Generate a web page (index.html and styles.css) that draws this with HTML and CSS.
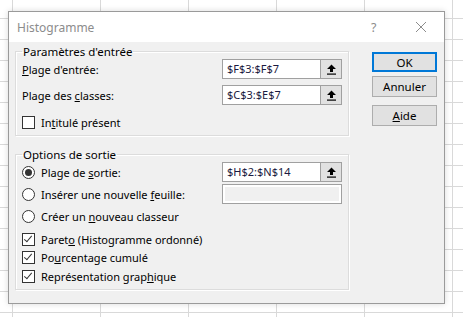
FILE: index.html
```html
<!DOCTYPE html>
<html lang="fr">
<head>
  <meta charset="UTF-8">
  <title>Histogramme</title>
  <link rel="stylesheet" href="styles.css">
</head>
<body>
  <div class="dialog">
    <div class="titlebar">
      <span class="title">Histogramme</span>
      <span class="help">?</span>
      <span class="close">
        <svg width="12" height="12" viewBox="0 0 12 12"><path d="M1 1 L11 11 M11 1 L1 11" stroke="#8c8c8c" stroke-width="1" fill="none"/></svg>
      </span>
    </div>

    <div class="content">
      <div class="groups">
        <fieldset class="group group-in">
          <legend>Paramètres d'entrée</legend>
          <div class="row">
            <span class="label"><u>P</u>lage d'entrée:</span>
            <div class="ref">
              <span class="ref-text">$F$3:$F$7</span>
              <span class="ref-btn">
                <svg width="11" height="11" viewBox="0 0 11 11"><path d="M5.5 0.5 L10 5 L7 5 L7 8 L4 8 L4 5 L1 5 Z" fill="#000"/><rect x="1" y="9.5" width="9" height="1.2" fill="#000"/></svg>
              </span>
            </div>
          </div>
          <div class="row">
            <span class="label">Plage des <u>c</u>lasses:</span>
            <div class="ref">
              <span class="ref-text">$C$3:$E$7</span>
              <span class="ref-btn">
                <svg width="11" height="11" viewBox="0 0 11 11"><path d="M5.5 0.5 L10 5 L7 5 L7 8 L4 8 L4 5 L1 5 Z" fill="#000"/><rect x="1" y="9.5" width="9" height="1.2" fill="#000"/></svg>
              </span>
            </div>
          </div>
          <div class="row row-check">
            <span class="check"></span>
            <span class="label">In<u>t</u>itulé présent</span>
          </div>
        </fieldset>

        <fieldset class="group group-out">
          <legend>Options de sortie</legend>
          <div class="row">
            <span class="radio on"></span>
            <span class="label">Plage de <u>s</u>ortie:</span>
            <div class="ref">
              <span class="ref-text">$H$2:$N$14</span>
              <span class="ref-btn">
                <svg width="11" height="11" viewBox="0 0 11 11"><path d="M5.5 0.5 L10 5 L7 5 L7 8 L4 8 L4 5 L1 5 Z" fill="#000"/><rect x="1" y="9.5" width="9" height="1.2" fill="#000"/></svg>
              </span>
            </div>
          </div>
          <div class="row">
            <span class="radio"></span>
            <span class="label">Insérer une nouvelle <u>f</u>euille:</span>
            <div class="ref ref-off"></div>
          </div>
          <div class="row">
            <span class="radio"></span>
            <span class="label">Créer un <u>n</u>ouveau classeur</span>
          </div>
          <div class="checks">
            <div class="row-check"><span class="check on"></span><span class="label">Paret<u>o</u> (Histogramme ordonné)</span></div>
            <div class="row-check"><span class="check on"></span><span class="label">Po<u>u</u>rcentage cumulé</span></div>
            <div class="row-check"><span class="check on"></span><span class="label">Représentation grap<u>h</u>ique</span></div>
          </div>
        </fieldset>
      </div>

      <div class="buttons">
        <button class="btn btn-default">OK</button>
        <button class="btn">Annuler</button>
        <button class="btn btn-help"><u>A</u>ide</button>
      </div>
    </div>
  </div>
</body>
</html>
```

FILE: styles.css
```css
body {
  margin: 0;
  width: 463px;
  height: 317px;
  overflow: hidden;
  font-family: 'Noto Sans', 'Liberation Sans', sans-serif;
  font-size: 11px;
  color: #000;
  background-color: #fff;
  background-image:
    linear-gradient(to right, #d9d9d9 1px, transparent 1px),
    linear-gradient(to bottom, #d9d9d9 1px, transparent 1px);
  background-size: 88px 21px;
  background-position: 12px 18px;
}
.dialog {
  margin: 11px 0 0 8px;
  width: 437px;
  height: 293px;
  box-sizing: border-box;
  background-color: #f0f0f0;
  border: 1px solid #9a9a9a;
  box-shadow: 0 0 6px rgba(0, 0, 0, 0.15);
}
.titlebar {
  height: 30px;
  background-color: #fff;
  display: flex;
  align-items: center;
  padding: 0 0 0 8px;
}
.title {
  color: #8c8c8c;
  font-size: 12px;
  flex: 1;
}
.help {
  color: #8c8c8c;
  font-size: 12.5px;
  width: 18px;
  margin-right: 26px;
}
.close {
  display: flex;
  width: 12px;
  margin-right: 17px;
}
.content {
  display: flex;
  padding: 2px 0 0 6px;
}
.groups {
  width: 334px;
  display: flex;
  flex-direction: column;
  gap: 11px;
}
.group {
  margin: 0;
  border: 1px solid #dcdcdc;
  box-shadow: 1px 1px 0 #fff, inset 1px 1px 0 #fff;
  padding: 0 6px 3px 6px;
}
.group legend {
  padding: 0 1px;
  line-height: 15px;
  font-size: 11.5px;
}
.row {
  display: flex;
  align-items: center;
  height: 20px;
}
.group-in .row {
  margin-top: 6px;
}
.group-in .row:first-of-type {
  margin-top: 0;
}
.group-in .row-check {
  margin-top: 7px;
}
.label {
  flex: 1;
  white-space: nowrap;
}
.ref {
  width: 120px;
  height: 20px;
  box-sizing: border-box;
  border: 1px solid #a0a0a0;
  background-color: #fff;
  display: flex;
}
.ref-text {
  flex: 1;
  padding-left: 4px;
  line-height: 18px;
  color: #1a1a40;
}
.ref-btn {
  width: 20px;
  background-color: #e1e1e1;
  border-left: 1px solid #a0a0a0;
  display: flex;
  align-items: center;
  justify-content: center;
}
.ref-off {
  background-color: #f0f0f0;
  box-shadow: inset 0 0 0 2px #fff;
}
.check {
  width: 13px;
  height: 13px;
  box-sizing: border-box;
  border: 1px solid #333;
  background-color: #fff;
  margin-right: 6px;
  position: relative;
}
.check.on::after {
  content: '';
  position: absolute;
  left: 3px;
  top: 0px;
  width: 3px;
  height: 7px;
  border: solid #333;
  border-width: 0 1px 1px 0;
  transform: rotate(40deg);
}
.radio {
  width: 13px;
  height: 13px;
  box-sizing: border-box;
  border: 1px solid #333;
  border-radius: 50%;
  background-color: #fff;
  margin-right: 6px;
  display: flex;
  align-items: center;
  justify-content: center;
}
.radio.on::after {
  content: '';
  width: 7px;
  height: 7px;
  border-radius: 50%;
  background-color: #333;
}
.group-out .row {
  margin-top: 2px;
}
.group-out .row:first-of-type {
  margin-top: 0;
}
.checks {
  margin-top: 4px;
}
.checks .row-check {
  display: flex;
  align-items: center;
  height: 18.5px;
}
.buttons {
  margin-left: 23px;
  padding-top: 8px;
  display: flex;
  flex-direction: column;
  width: 65px;
}
.btn {
  font-family: inherit;
  font-size: 11.5px;
  height: 21px;
  padding: 0;
  background-color: #e1e1e1;
  border: 1px solid #adadad;
  margin-bottom: 4px;
  color: #000;
}
.btn-default {
  border: 2px solid #0078d7;
  height: 20px;
}
.btn-help {
  margin-top: 4px;
}
```
